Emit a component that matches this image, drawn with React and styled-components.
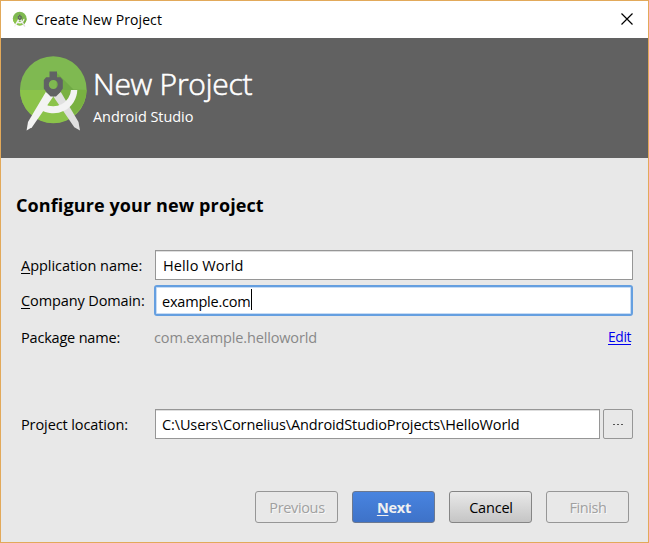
import React from "react";
import styled, { createGlobalStyle } from "styled-components";

const GlobalStyle = createGlobalStyle`
  * { box-sizing: border-box; }
  html, body { margin: 0; padding: 0; }
  body {
    font-family: "Open Sans", "Noto Sans", sans-serif;
    font-size: 14.5px;
    color: #000;
    overflow: hidden;
  }
`;

const Window = styled.div`
  width: 649px;
  height: 543px;
  display: flex;
  flex-direction: column;
  border: 1px solid #e2a95a;
  background: #e8e8e8;
  white-space: nowrap;
`;

const TitleBar = styled.header`
  height: 37px;
  flex: none;
  display: flex;
  align-items: center;
  padding: 0 15px 0 11px;
  background: #fff;
`;

const WindowTitle = styled.span`
  flex: 1;
  margin-left: 7px;
  font-size: 14px;
  letter-spacing: 0.099px;
  line-height: 36px;
`;

const CloseButton = styled.button`
  width: 12px;
  height: 12px;
  margin-bottom: 1px;
  padding: 0;
  border: 0;
  background: none;
  svg { display: block; }
`;

const Banner = styled.section`
  height: 120px;
  flex: none;
  display: flex;
  align-items: flex-start;
  padding: 15px 0 0 15px;
  background: #616161;
  color: #fff;
`;

const BannerText = styled.div`
  display: flex;
  flex-direction: column;
  margin: 11px 0 0 3px;
`;

const BannerTitle = styled.h1`
  margin: 0;
  font-size: 30px;
  font-weight: 300;
  -webkit-text-stroke: 0.6px #fff;
  line-height: 40px;
  letter-spacing: -0.25px;
`;

const BannerSubtitle = styled.p`
  margin: 2px 0 0;
  font-size: 14.5px;
  line-height: 22px;
  letter-spacing: -0.06px;
`;

const Content = styled.main`
  flex: 1;
  display: flex;
  flex-direction: column;
  padding: 33px 15px 19px;
`;

const Heading = styled.h2`
  margin: 0;
  font-size: 18px;
  font-weight: 700;
  line-height: 28px;
  letter-spacing: 0.11px;
`;

const Form = styled.div`
  display: grid;
  grid-template-columns: 134px 1fr;
  grid-template-rows: 32px 34px 36px;
  row-gap: 2px;
  align-items: center;
  margin-top: 30px;
  padding-left: 5px;
`;

const LocationForm = styled(Form)`
  grid-template-columns: 134px 445px 33px;
  grid-template-rows: 30px;
  margin-top: 54px;
`;

const Label = styled.label`
  padding-top: 2px;
  line-height: 30px;
  letter-spacing: ${(p) => p.$spacing}px;
`;

const Mnemonic = styled.span`
  text-decoration: underline;
  text-decoration-thickness: 1px;
  text-underline-offset: 2px;
`;

const Field = styled.div`
  height: 30px;
  display: flex;
  align-items: center;
  padding: 2px 7px 0;
  border: 1px solid #969696;
  box-shadow: inset 0 1px 0 #dedede;
  background: #fff;
  line-height: 26px;
  letter-spacing: ${(p) => p.$spacing}px;
`;

const PathField = styled(Field)`
  padding-left: 6px;
`;

const FocusedField = styled(Field)`
  height: 31px;
  margin-left: -1px;
  padding: 2px 6px 0;
  border: 2px solid #659fe0;
  border-radius: 3px;
  box-shadow: inset 0 0 0 1px #c7dcf5;
  line-height: 25px;
`;

const Caret = styled.span`
  width: 1px;
  height: 21px;
  margin-top: -4px;
  background: #000;
`;

const PackageRow = styled.div`
  display: flex;
  align-items: center;
  justify-content: space-between;
  padding-right: 2px;
`;

const PackageName = styled.span`
  margin-left: -1px;
  color: #888;
  letter-spacing: -0.141px;
`;

const EditLink = styled.a`
  margin-top: -1px;
  color: #0000ee;
  font-size: 13.8px;
  line-height: 15px;
  letter-spacing: -0.4px;
  border-bottom: 1px solid #0000ee;
`;

const BrowseButton = styled.button`
  width: 30px;
  height: 30px;
  margin-left: 3px;
  display: flex;
  align-items: center;
  justify-content: center;
  gap: 2px;
  padding: 0;
  border: 1px solid #969696;
  border-radius: 2px;
  background: #e8e8e8;
`;

const Dot = styled.span`
  width: 2px;
  height: 1px;
  background: #555;
`;

const Actions = styled.footer`
  display: flex;
  justify-content: flex-end;
  gap: 14px;
  margin-top: auto;
  padding-right: 4px;
`;

const Button = styled.button`
  width: 83px;
  height: 32px;
  padding: 1px 0 0 1px;
  border: 1px solid #858585;
  border-radius: 3px;
  background: linear-gradient(#e9e9e9, #c5c5c5);
  color: #000;
  font: 400 14.5px/29px "Open Sans", "Noto Sans", sans-serif;
  letter-spacing: ${(p) => p.$spacing}px;
`;

const PrimaryButton = styled(Button)`
  border-color: #6b7890;
  background: linear-gradient(#4884e0, #3e72c8);
  color: #f0f0f0;
  font-weight: 700;
`;

const DisabledButton = styled(Button)`
  border-color: #969696;
  background: #e8e8e8;
  color: #a0a0a0;
  text-shadow: 1px 1px 0 #f8f8f8;
`;

function StudioLogo({ size }) {
  return (
    <svg width={size} height={size * (78 / 70)} viewBox="0 0 70 78" aria-hidden="true">
      <circle cx="37.3" cy="36.5" r="33.3" fill="#7fb951" />
      <path d="M4 37a33.3 33.3 0 0 0 66.6 0Z" fill="#8bc34a" />
      <path d="M41 20 57.5 36.5 70.6 37A33.3 33.3 0 0 1 58 62L40 44Z" fill="#558b2f" opacity=".32" />
      <path d="M44.8 39 37.3 43.5 58.3 74.3 64 77.5 62.5 69Z" fill="#e0e0e0" />
      <path d="M29.8 39 37.3 43.5 16 74.3 10.6 77.5 12 69Z" fill="#f3f3f3" />
      <path
        d="M55 37H61.3A24 24 0 0 1 23.5 56L28.5 51A17.7 17.7 0 0 0 55 37Z"
        fill="#f3f3f3"
      />
      <path
        fillRule="evenodd"
        d="M33.5 18.5H41V24.3H44.5L46.8 27V35.5L44 39.5 40 43.5H34.6L30.6 39.5 27.8 35.5V27L30.1 24.3H33.5ZM37.3 27a4.5 4.5 0 1 0 0 9 4.5 4.5 0 0 0 0-9Z"
        fill="#606264"
      />
    </svg>
  );
}

const BannerLogo = styled.div`
  width: 74px;
  height: 80px;
  svg { display: block; overflow: visible; }
`;

const TitleLogo = styled.div`
  width: 16px;
  height: 18px;
  svg { display: block; overflow: visible; }
`;

export default function App() {
  return (
    <>
      <GlobalStyle />
      <Window>
        <TitleBar>
          <TitleLogo><StudioLogo size={14.5} /></TitleLogo>
          <WindowTitle>Create New Project</WindowTitle>
          <CloseButton aria-label="Close">
            <svg width="12" height="12" viewBox="0 0 12 12">
              <path d="M.5.5 11.5 11.5M11.5.5.5 11.5" stroke="#000" strokeWidth="1.2" />
            </svg>
          </CloseButton>
        </TitleBar>
        <Banner>
          <BannerLogo><StudioLogo size={70} /></BannerLogo>
          <BannerText>
            <BannerTitle>New Project</BannerTitle>
            <BannerSubtitle>Android Studio</BannerSubtitle>
          </BannerText>
        </Banner>
        <Content>
          <Heading>Configure your new project</Heading>
          <Form>
            <Label $spacing={-0.03}><Mnemonic>A</Mnemonic>pplication name:</Label>
            <Field $spacing={0.12}>Hello World</Field>
            <Label $spacing={-0.11}><Mnemonic>C</Mnemonic>ompany Domain:</Label>
            <FocusedField $spacing={-0.2}>example.com<Caret /></FocusedField>
            <Label $spacing={-0.193}>Package name:</Label>
            <PackageRow>
              <PackageName>com.example.helloworld</PackageName>
              <EditLink>Edit</EditLink>
            </PackageRow>
          </Form>
          <LocationForm>
            <Label $spacing={-0.1}>Project location:</Label>
            <PathField $spacing={-0.12}>C:\Users\Cornelius\AndroidStudioProjects\HelloWorld</PathField>
            <BrowseButton aria-label="Browse"><Dot /><Dot /><Dot /></BrowseButton>
          </LocationForm>
          <Actions>
            <DisabledButton $spacing={-0.35}>Previous</DisabledButton>
            <PrimaryButton $spacing={-0.2}><Mnemonic>N</Mnemonic>ext</PrimaryButton>
            <Button $spacing={-0.2}>Cancel</Button>
            <DisabledButton $spacing={-0.4}>Finish</DisabledButton>
          </Actions>
        </Content>
      </Window>
    </>
  );
}
